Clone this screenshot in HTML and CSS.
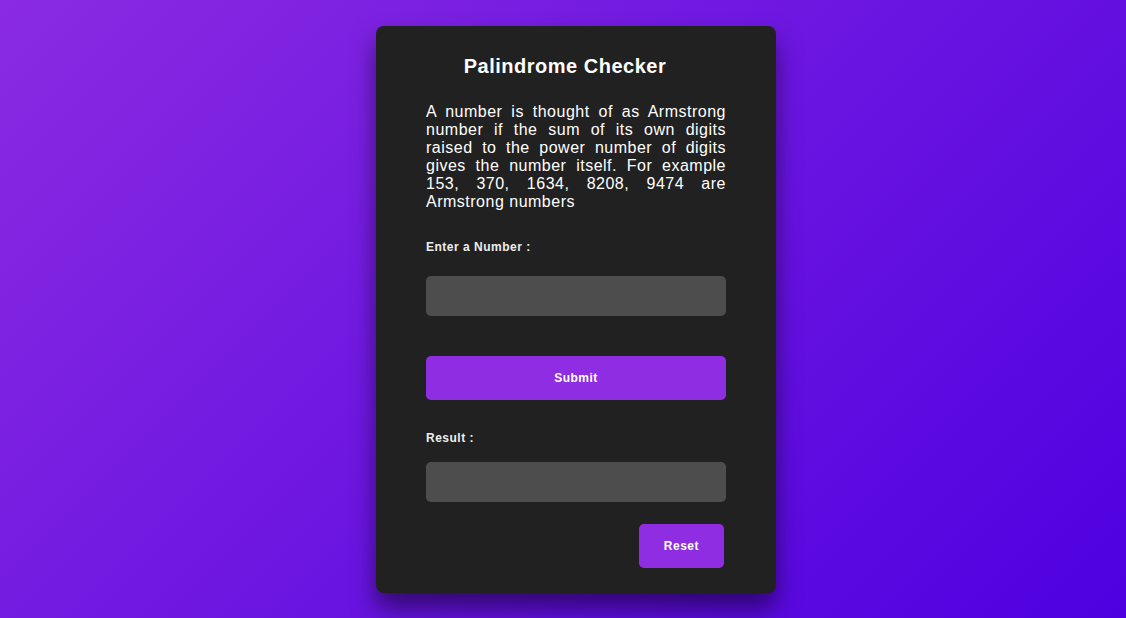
FILE: index.html
```html
<!DOCTYPE html>
<html lang="en">
<head>
<meta charset="utf-8">
<meta name="viewport" content="width=device-width, initial-scale=1">
<title>Palindrome Checker</title>
<link rel="stylesheet" href="styles.css">
</head>
<body>
<main class="card">
<h1 class="title">Palindrome Checker</h1>
<p class="intro">A number is thought of as Armstrong number if the sum of its own digits raised to the power number of digits gives the number itself. For example 153, 370, 1634, 8208, 9474 are Armstrong numbers</p>
<form class="form">
<label class="label" for="number">Enter a Number :</label>
<input class="field" id="number" type="text">
<button class="button submit" type="button">Submit</button>
<label class="label" for="result">Result :</label>
<input class="field result" id="result" type="text" readonly>
<button class="button reset" type="reset">Reset</button>
</form>
</main>
</body>
</html>
```

FILE: styles.css
```css
* {
  box-sizing: border-box;
}

body {
  margin: 0;
  min-height: 100vh;
  padding: 26px 0 25px 26px;
  display: flex;
  align-items: flex-start;
  justify-content: center;
  background: linear-gradient(135deg, #8a2be2, #4e00e0);
  font-family: "Liberation Sans", Arial, sans-serif;
  color: #fff;
}

.card {
  width: 100%;
  max-width: 400px;
  padding: 28px 50px 25px;
  border-radius: 8px;
  background: #212121;
  box-shadow: 0 15px 25px rgba(0, 0, 0, 0.5);
}

.title {
  margin: 0 22px 25px 0;
  font-size: 20px;
  line-height: 24px;
  letter-spacing: 0.5px;
  text-align: center;
}

.intro {
  margin: 0 0 29px;
  font-size: 16px;
  line-height: 18px;
  letter-spacing: 0.5px;
  text-align: justify;
}

.form {
  display: flex;
  flex-direction: column;
}

.label {
  color: #eee;
  font-size: 12px;
  font-weight: bold;
  line-height: 14px;
  letter-spacing: 0.5px;
}

.field {
  width: 100%;
  height: 40px;
  margin: 22px 0 40px;
  padding: 0 12px;
  border: 0;
  border-radius: 5px;
  background: #4d4d4d;
  color: #fff;
  font: 14px "Liberation Sans", Arial, sans-serif;
}

.button {
  height: 44px;
  padding: 0 25px;
  border: 0;
  border-radius: 5px;
  background: #8f2de2;
  color: #fff;
  font: bold 12px "Liberation Sans", Arial, sans-serif;
  letter-spacing: 0.5px;
  cursor: pointer;
}

.submit {
  margin-bottom: 31px;
}

.result {
  margin: 17px 0 22px;
}

.reset {
  align-self: flex-end;
  margin-right: 2px;
}
```
